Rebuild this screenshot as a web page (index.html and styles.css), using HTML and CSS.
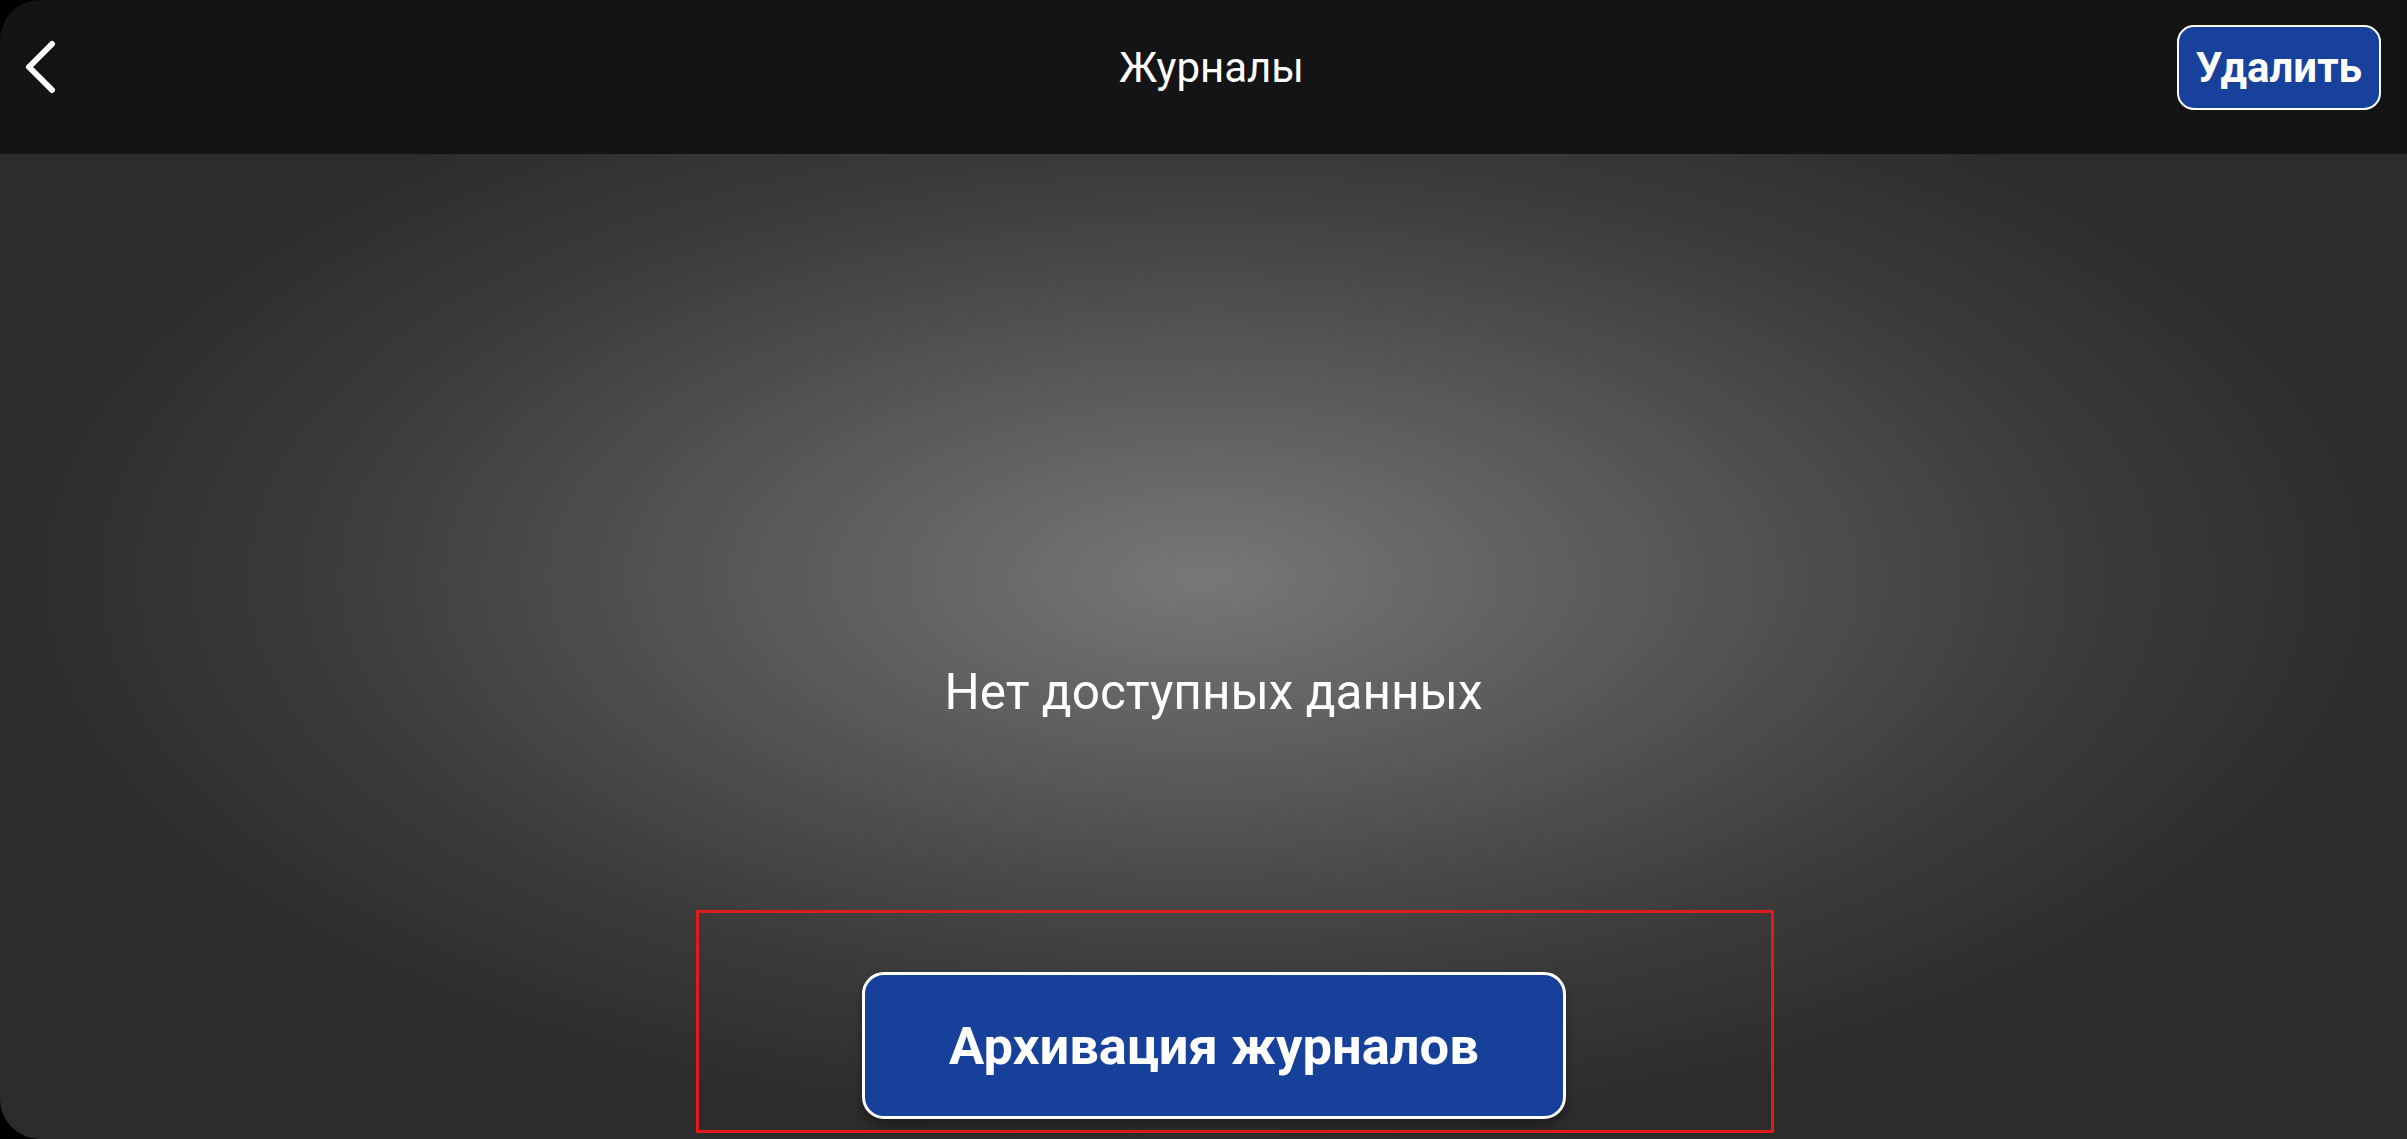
FILE: index.html
```html
<!DOCTYPE html>
<html lang="ru">
<head>
  <meta charset="UTF-8">
  <meta name="viewport" content="width=device-width, initial-scale=1.0">
  <title>Журналы</title>
  <link rel="stylesheet" href="styles.css">
</head>
<body>
  <div class="screen">
    <header class="topbar">
      <button class="back-button" aria-label="Назад">
        <svg width="32" height="54" viewBox="0 0 32 54">
          <polyline points="28,4 5,27 28,50" fill="none" stroke="#fff" stroke-width="6" stroke-linecap="round" stroke-linejoin="round"/>
        </svg>
      </button>
      <h1 class="title">Журналы</h1>
      <div class="topbar-right">
        <button class="delete-button">Удалить</button>
      </div>
    </header>

    <main class="content">
      <div class="empty">
        <p class="empty-text">Нет доступных данных</p>
      </div>
      <div class="actions">
        <button class="archive-button">Архивация журналов</button>
      </div>
    </main>
  </div>
</body>
</html>
```

FILE: styles.css
```css
html, body {
  margin: 0;
  padding: 0;
  height: 100%;
  background: #000;
}

body {
  font-family: Roboto, "Noto Sans", Arial, sans-serif;
  color: #fff;
  overflow: hidden;
}

.screen {
  height: 1139px;
  display: flex;
  flex-direction: column;
  border-radius: 40px 0 0 40px;
  overflow: hidden;
}

/* верхняя панель */
.topbar {
  height: 154px;
  box-sizing: border-box;
  padding: 0 26px 20px 24px;
  background: #141416;
  display: grid;
  grid-template-columns: 1fr auto 1fr;
  align-items: center;
}

.back-button {
  background: none;
  border: none;
  padding: 0;
  width: 32px;
  height: 54px;
  cursor: pointer;
  display: flex;
}

.title {
  margin: 0;
  font-size: 42px;
  font-weight: 400;
  line-height: 49px;
  padding-left: 18px;
}

.topbar-right {
  display: flex;
  justify-content: flex-end;
}

.delete-button {
  height: 85px;
  box-sizing: border-box;
  padding: 0 17px;
  background: #17419a;
  color: #fff;
  border: 2.5px solid #fff;
  border-radius: 17px;
  font-family: inherit;
  font-size: 42px;
  font-weight: 700;
  cursor: pointer;
}

/* основная часть */
.content {
  flex: 1;
  display: flex;
  flex-direction: column;
  align-items: center;
  background: radial-gradient(ellipse farthest-side at 50% 43%, #777 0%, #5a5a5a 35%, #3c3c3c 72%, #2c2c2c 100%);
}

.empty {
  height: 756px;
  box-sizing: border-box;
  padding: 508px 0 0 20px;
}

.empty-text {
  margin: 0;
  font-size: 49.5px;
  line-height: 60px;
}

.actions {
  width: 1078px;
  height: 223px;
  box-sizing: border-box;
  margin-left: 63px;
  border: 3px solid #e01b1b;
  padding: 59px 0 0 163px;
}

.archive-button {
  width: 704px;
  height: 147px;
  box-sizing: border-box;
  background: #16409a;
  color: #fff;
  border: 3px solid #fff;
  border-radius: 22px;
  font-family: inherit;
  font-size: 52.5px;
  font-weight: 700;
  box-shadow: 0 6px 10px rgba(0,0,0,0.35);
  cursor: pointer;
}
```
